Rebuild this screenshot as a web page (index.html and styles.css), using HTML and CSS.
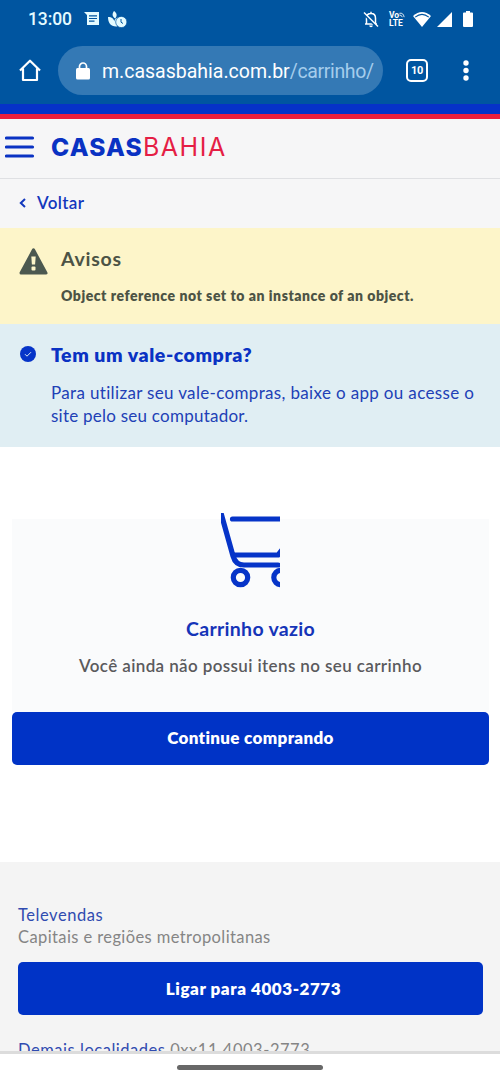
FILE: index.html
```html
<!DOCTYPE html>
<html lang="pt-BR">
<head>
<meta charset="utf-8">
<title>Casas Bahia - Carrinho</title>
<link rel="stylesheet" href="styles.css">
</head>
<body>
<div class="phone">
  <header class="browser">
    <div class="status">
      <span class="clock">13:00</span>
      <svg class="message" width="16" height="14" viewBox="0 0 16 14"><path fill="#e4fbff" d="M0 0h15v13H3V3Z"/><path d="M5 3.800h8M5 6.500h8M5 9.200h5.500" stroke="#0055a0" stroke-width="1.200"/></svg>
      <svg class="plant" width="19" height="17" viewBox="0 0 19 17"><path fill="#e4fbff" d="M6 0c3 2 3.500 5 1.200 7.500C4 5.500 4 2.500 6 0ZM0 6c4 0 6 2 6.200 4.500C6.500 8 8 7 10.500 6.500L9 15.500C3 16 0 12 0 6Z"/><circle cx="13.300" cy="11" r="5.600" fill="#e4fbff" stroke="#0055a0" stroke-width=".7"/><path d="M13 8v3.200l2 1.300" fill="none" stroke="#0055a0"/></svg>
      <svg class="bell" width="16" height="17" viewBox="0 0 16 17"><path d="M3.500 13V7.200C3.500 4 5 2.500 8 2.500s4.500 1.700 4.500 4.700V13M2 13h12M8 .7v1.800" fill="none" stroke="#fff" stroke-width="1.500"/><path d="M6.200 14.500h3.600a1.800 1.800 0 0 1-3.600 0Z" fill="#fff"/><path d="M0 2.200 14 16.200" stroke="#0055a0" stroke-width="2"/><path d="m1 1.500 14 14" stroke="#fff" stroke-width="1.400"/></svg>
      <div class="volte"><span>Vo<svg width="6" height="6" viewBox="0 0 7 6"><path d="M.5 1Q5 0 6 5.500M.5 3Q3.300 3 3.800 5.500" fill="none" stroke="#fff"/></svg></span><span>LTE</span></div>
      <svg class="wifi" width="18" height="15" viewBox="0 0 18 15"><path fill="#fff" d="M0 4Q9-4 18 4L9 15Z"/><path d="M2.200 5.100Q9-.2 15.800 5.100" fill="none" stroke="#0055a0" stroke-width="1.200"/></svg>
      <svg class="signal" width="15" height="15" viewBox="0 0 15 15"><path fill="#fff" d="M15 0v15H0Z"/></svg>
      <svg class="battery" width="10" height="16" viewBox="0 0 10 16"><path fill="#fff" d="M3 0h4v1.500h2q1 0 1 1V15q0 1-1 1H1q-1 0-1-1V2.500q0-1 1-1h2Z"/></svg>
    </div>
    <div class="toolbar">
      <svg class="home" width="22" height="23" viewBox="0 0 22 23"><path d="M1 11.500 11 1.700l10 9.800M4 9.500V21h14V9.500" fill="none" stroke="#fff" stroke-width="2.200" stroke-linejoin="round"/></svg>
      <div class="address">
        <svg class="lock" width="14" height="18" viewBox="0 0 14 18"><path d="M3.500 8V4.500a3.500 3.500 0 0 1 7 0V8" fill="none" stroke="#fff" stroke-width="1.700"/><rect y="6" width="14" height="11.500" rx="1.500" fill="#fff"/></svg>
        <span class="url">m.casasbahia.com.br<span class="path">/carrinho/</span></span>
      </div>
      <div class="tabs">10</div>
      <svg class="more" width="6" height="21" viewBox="0 0 6 21"><g fill="#fff"><circle cx="3" cy="3" r="2.700"/><circle cx="3" cy="10.500" r="2.700"/><circle cx="3" cy="18" r="2.700"/></g></svg>
    </div>
  </header>

  <div class="brandbar">
    <svg width="30" height="22" viewBox="0 0 30 22"><path d="M1.500 2h26M1.500 11h26M1.500 20h26" stroke="#0a32c3" stroke-width="3.200" stroke-linecap="round"/></svg>
    <div class="logo"><span class="casas">CASAS</span><span class="bahia">BAHIA</span></div>
  </div>
  <nav class="back">
    <svg width="7" height="10" viewBox="0 0 7 10"><path d="M6 1 1.800 5 6 9" fill="none" stroke="#1338bd" stroke-width="2"/></svg>
    <span class="backtext">Voltar</span>
  </nav>
  <section class="warning">
    <svg width="29" height="27" viewBox="0 0 29 27"><path d="M14.500 1.800 27 25H2Z" fill="#4c5950" stroke="#4c5950" stroke-width="3" stroke-linejoin="round"/><path d="M12.300 8.500h4.400l-.6 8h-3.200Z" fill="#fdf6c9"/><rect x="12.500" y="18.500" width="4" height="4" rx="1" fill="#fdf6c9"/></svg>
    <div>
      <h2 class="warning-title">Avisos</h2>
      <p class="warning-text">Object reference not set to an instance of an object.</p>
    </div>
  </section>
  <section class="voucher">
    <svg width="16" height="16" viewBox="0 0 16 16"><circle cx="8" cy="8" r="8" fill="#0634c8"/><path d="m5 8.200 2 2 4-4" fill="none" stroke="#dceaf5" stroke-width="1"/></svg>
    <div>
      <h2 class="voucher-title">Tem um vale-compra?</h2>
      <p class="voucher-text"><span class="l1">Para utilizar seu vale-compras, baixe o app ou acesse o</span><br><span class="l2">site pelo seu computador.</span></p>
    </div>
  </section>

  <main class="cart">
    <div class="card">
      <svg class="trolley" width="59" height="75" viewBox="0 0 59 75"><g fill="none" stroke="#0634c8" stroke-width="5.200" stroke-linecap="round"><path d="M0 0 12 43q2.500 9 11 9h34M11.500 6H66M14 42h43l8-10"/><circle cx="19.500" cy="64.500" r="7.200"/><circle cx="60" cy="64.500" r="7.200"/></g></svg>
      <h1 class="empty-title">Carrinho vazio</h1>
      <p class="empty-text">Você ainda não possui itens no seu carrinho</p>
    </div>
    <div class="button"><span class="continue">Continue comprando</span></div>
  </main>

  <footer class="footer">
    <div class="sales">Televendas</div>
    <div class="regions">Capitais e regiões metropolitanas</div>
    <div class="button call-button"><span class="call">Ligar para 4003-2773</span></div>
    <div class="others"><span class="link">Demais localidades</span> 0xx11 4003-2773</div>
  </footer>
  <div class="system"><div class="handle"></div></div>
</div>
</body>
</html>
```
FILE: styles.css
```css
* { box-sizing: border-box; }
body { margin: 0; background: #fff; font-family: Lato, "Open Sans", sans-serif; }
h1, h2, p { margin: 0; }
svg { display: block; flex: none; }
.phone { width: 500px; height: 1082px; overflow: hidden; display: flex; flex-direction: column; }
.phone > * { flex: none; }

.browser { height: 104px; background: #0055a0; color: #fff; font-family: Roboto, sans-serif; }
.status { height: 38px; padding-left: 28px; display: flex; align-items: center; }
.clock { width: 56px; font-size: 17.500px; font-weight: 500; color: #e4fbff; letter-spacing: -.1px; }
.plant { margin-left: 8px; }
.bell { margin-left: 236px; }
.volte { margin-left: 10px; width: 17px; display: flex; flex-direction: column; font-size: 8.500px; line-height: 8px; font-weight: 700; white-space: nowrap; }
.volte svg { display: inline-block; vertical-align: 0; }
.wifi { margin-left: 7px; }
.signal { margin-left: 6px; }
.battery { margin-left: 11px; }
.toolbar { height: 66px; padding: 8px 0 0 19px; display: flex; align-items: flex-start; }
.home { margin-top: 13px; }
.address { width: 325px; height: 49px; margin-left: 17px; padding-left: 18px; border-radius: 25px; background: #3479b5; display: flex; align-items: center; }
.url { margin-left: 12px; padding-top: 2px; font-size: 19.500px; white-space: nowrap; }
.path { color: #a5cdec; letter-spacing: -.35px; }
.tabs { width: 22px; height: 23px; margin: 13px 0 0 23px; border: 2px solid #fff; border-radius: 5px; font-size: 11px; line-height: 19px; font-weight: 700; letter-spacing: -.3px; text-align: center; }
.more { margin: 14px 0 0 35px; }

.brandbar { height: 75px; border-top: 10px solid #0632c8; border-bottom: 1px solid #dfe0e3; background: linear-gradient(#ef1d3c 5px, #f6f6f7 5px); padding: 2px 0 0 5px; display: flex; align-items: center; }
.logo { margin-left: 16px; font-family: Inter, sans-serif; font-size: 24.500px; line-height: 30px; display: flex; }
.casas { font-weight: 800; color: #0a32c3; width: 92px; letter-spacing: 1.200px; }
.bahia { color: #e51e45; font-weight: 400; font-size: 25px; letter-spacing: 1.500px; }
.back { height: 49px; background: #f6f6f7; padding: 0 0 2px 19px; display: flex; align-items: center; }
.backtext { margin-left: 11px; color: #1338bd; font-size: 17px; font-weight: 600; letter-spacing: .35px; }

.warning { height: 96px; background: #fdf5c9; color: #4c5345; padding: 20px 0 0 19px; display: flex; gap: 13px; }
.warning-title { font-size: 19.500px; line-height: 22px; font-weight: 700; letter-spacing: .75px; }
.warning-text { margin-top: 16px; font-size: 14px; line-height: 20px; font-weight: 800; letter-spacing: .53px; white-space: nowrap; }
.voucher { height: 123px; background: #e0eef3; color: #0a32c3; padding: 20px 0 0 20px; display: flex; gap: 15px; }
.voucher > svg { margin-top: 2px; }
.voucher-title { font-size: 19.500px; line-height: 22px; font-weight: 800; letter-spacing: .55px; }
.voucher-text { margin-top: 15px; font-size: 17px; line-height: 23px; color: #2140b6; white-space: nowrap; }
.l1 { letter-spacing: .34px; }
.l2 { letter-spacing: .24px; }

.cart { height: 415px; padding: 72px 11px 0 12px; background: #fff; }
.card { height: 193px; background: #fafbfc; display: flex; flex-direction: column; align-items: center; }
.trolley { margin-top: -6px; }
.empty-title { margin-top: 29px; font-size: 19.500px; line-height: 24px; font-weight: 700; letter-spacing: .3px; color: #1534b8; }
.empty-text { margin-top: 13px; font-size: 17px; line-height: 24px; font-weight: 600; letter-spacing: .38px; color: #5a5a5d; }
.button { height: 53px; padding-bottom: 2px; border-radius: 5px; background: #0033c6; color: #fff; font-size: 17px; font-weight: 800; display: flex; align-items: center; justify-content: center; }
.continue { letter-spacing: .33px; }
.call { letter-spacing: .55px; }

.footer { height: 189px; overflow: hidden; background: #f4f4f4; padding: 42px 17px 0 18px; color: #858585; font-size: 16.500px; line-height: 22px; }
.sales, .link { color: #304bb0; }
.sales { letter-spacing: .55px; }
.regions { letter-spacing: .4px; }
.call-button { margin-top: 14px; padding: 0 0 0 6px; }
.others { margin-top: 24px; white-space: nowrap; letter-spacing: .53px; }
.system { height: 31px; background: #fff; border-top: 3px solid #dcdcdc; padding-top: 11px; }
.handle { width: 146px; height: 5px; margin: 0 auto; border-radius: 3px; background: #686868; }
```
